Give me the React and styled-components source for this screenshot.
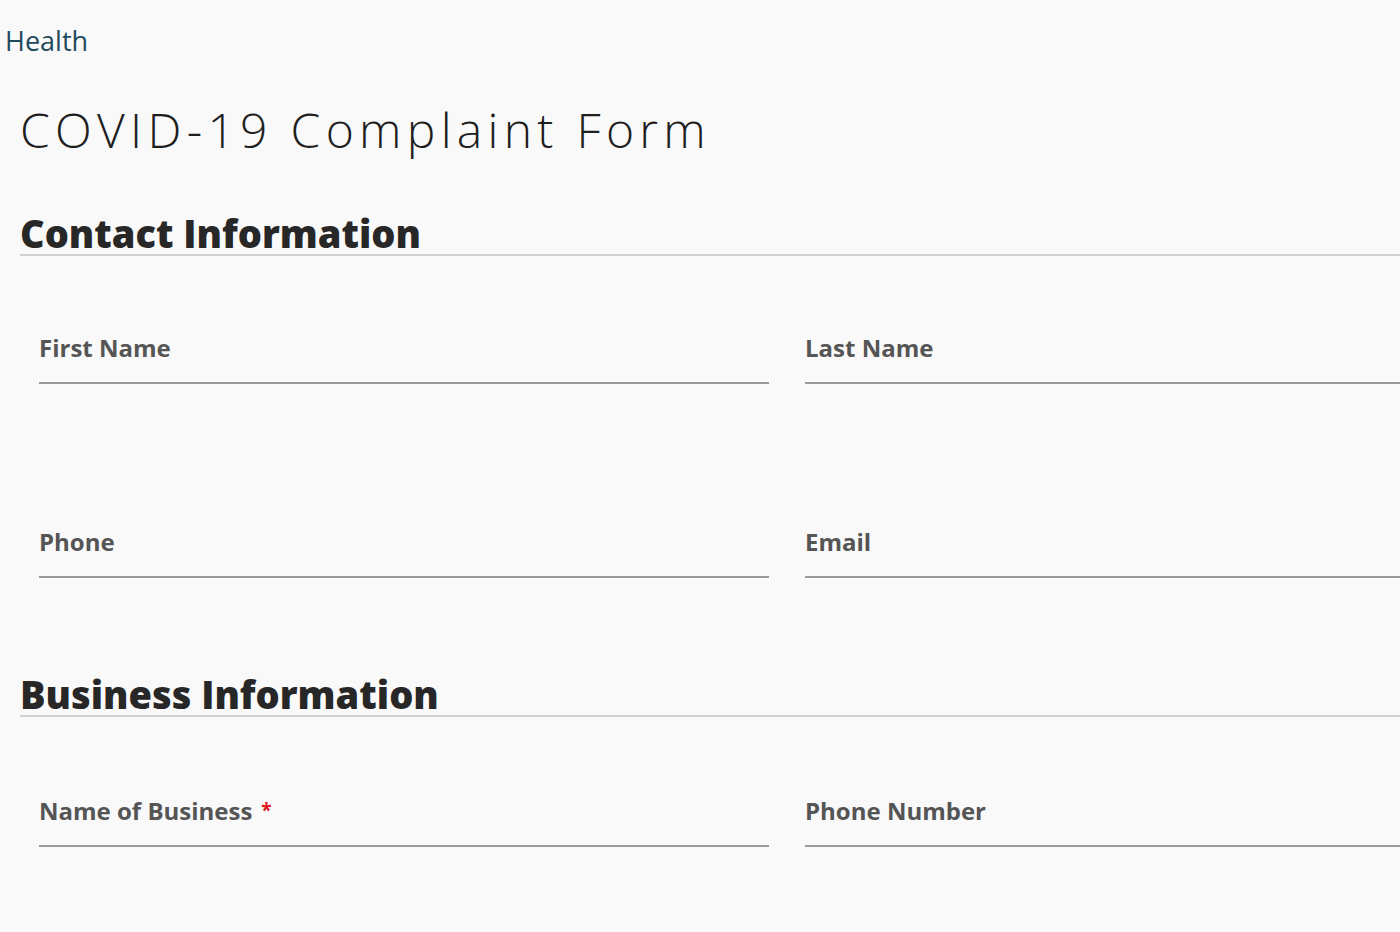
import React from "react";
import styled, { createGlobalStyle } from "styled-components";

const Global = createGlobalStyle`
  html, body { margin: 0; padding: 0; background: #f9f9f9; overflow: hidden; }
  body { font-family: "Open Sans", "DejaVu Sans", sans-serif; }
`;

const Page = styled.div`
  width: 1400px;
  height: 932px;
  overflow: hidden;
  background: #f9f9f9;
`;

const Breadcrumb = styled.a`
  display: block;
  padding: 24px 0 0 5px;
  height: 34px;
  font-size: 27px;
  font-weight: 400;
  color: #1f4a5c;
  text-decoration: none;
  line-height: 34px;
`;

const Content = styled.div`
  width: 1540px;
  padding-left: 20px;
`;

const Title = styled.h1`
  margin: 42px 0 0 0;
  font-size: 48px;
  font-weight: 300;
  letter-spacing: 5.3px;
  color: #1e1e1e;
  line-height: 60px;
`;

const SectionHeading = styled.h2`
  margin: ${(p) => p.$top}px 0 0 0;
  font-size: 38px;
  font-weight: 800;
  color: #272727;
  line-height: 42px;
  padding-bottom: 0;
  border-bottom: 2px solid #d2d2d2;
`;

const FieldGrid = styled.div`
  display: grid;
  grid-template-columns: 730px 730px;
  column-gap: 36px;
  row-gap: ${(p) => p.$rowGap}px;
  padding: ${(p) => p.$top}px 0 0 19px;
`;

const Field = styled.div`
  display: flex;
  flex-direction: column;
`;

const Label = styled.label`
  font-size: 24px;
  font-weight: 700;
  color: #555;
  line-height: 34px;
  height: 30px;
`;

const Star = styled.span`
  color: #e0141e;
  margin-left: 9px;
  font-size: 19px;
  position: relative;
  top: -3px;
`;

const Input = styled.input`
  border: none;
  border-bottom: 2px solid #9a9a9a;
  background: transparent;
  height: 21px;
  padding: 0;
  outline: none;
`;

export default function App() {
  return (
    <Page>
      <Global />
      <Breadcrumb href="#">Health</Breadcrumb>
      <Content>
        <Title>COVID-19 Complaint Form</Title>
        <SectionHeading $top={52}>Contact Information</SectionHeading>
        <FieldGrid $top={75} $rowGap={141}>
          <Field><Label>First Name</Label><Input /></Field>
          <Field><Label>Last Name</Label><Input /></Field>
          <Field><Label>Phone</Label><Input /></Field>
          <Field><Label>Email</Label><Input /></Field>
        </FieldGrid>
        <SectionHeading $top={95}>Business Information</SectionHeading>
        <FieldGrid $top={77} $rowGap={141}>
          <Field><Label>Name of Business<Star>*</Star></Label><Input /></Field>
          <Field><Label>Phone Number</Label><Input /></Field>
        </FieldGrid>
      </Content>
    </Page>
  );
}
